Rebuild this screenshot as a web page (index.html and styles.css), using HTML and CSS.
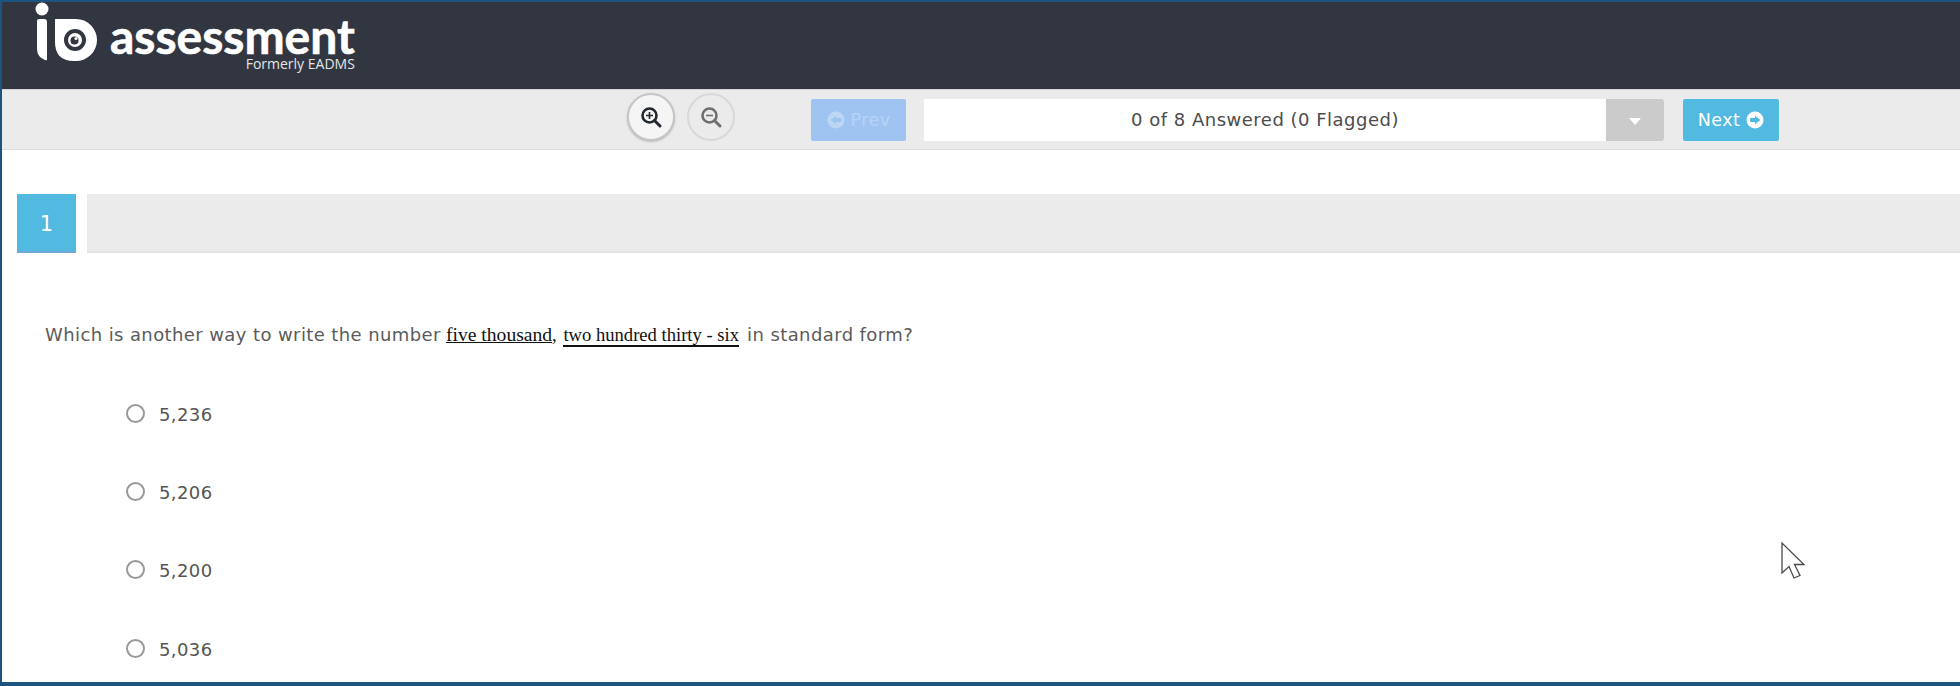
FILE: index.html
```html
<!DOCTYPE html>
<html lang="en">
<head>
<meta charset="utf-8">
<title>IO Assessment</title>
<link rel="stylesheet" href="styles.css">
</head>
<body>
<div class="frame">
  <header class="header">
    <div class="logo">
      <svg class="logo-mark" width="66" height="60" viewBox="0 0 66 60">
        <circle cx="7" cy="7" r="6.5" fill="#fff"/>
        <path d="M2 19 Q2 17 4 17 H9 Q12 17 12 20 V57 Q12 59 10 58 Q2 55 2 47 Z" fill="#fff"/>
        <path d="M20 17 H41 A21 21 0 1 1 41 59 H39 Q20 59 20 40 Z" fill="#fff"/>
        <circle cx="40" cy="38" r="11" fill="#313641"/>
        <circle cx="40" cy="38" r="7" fill="#fff"/>
        <circle cx="39.500" cy="38.500" r="4" fill="#313641"/>
        <circle cx="41" cy="36.500" r="1.500" fill="#fff"/>
      </svg>
      <div class="logo-text">
        <span class="logo-name">assessment</span>
        <span class="logo-sub">Formerly EADMS</span>
      </div>
    </div>
  </header>
  <nav class="toolbar">
    <div class="zooms">
      <button class="zoom zoom-on" type="button" aria-label="Zoom in">
        <svg width="24" height="24" viewBox="0 0 24 24" fill="none" stroke="#23272e" stroke-width="2.6"><circle cx="10.5" cy="10.5" r="7"/><path d="M15.5 15.5 21 21" stroke-linecap="round" stroke-width="3"/><path d="M10.5 7v7M7 10.500h7" stroke-width="1.600"/></svg>
      </button>
      <button class="zoom" type="button" aria-label="Zoom out">
        <svg width="24" height="24" viewBox="0 0 24 24" fill="none" stroke="#6d6f70" stroke-width="2.6"><circle cx="10.5" cy="10.5" r="7"/><path d="M15.5 15.5 21 21" stroke-linecap="round" stroke-width="3"/><path d="M7 10.500h7" stroke-width="1.600"/></svg>
      </button>
    </div>
    <button class="nav nav-prev" type="button">
      <svg width="18" height="18" viewBox="0 0 18 18"><circle cx="9" cy="9" r="8.500" fill="#bcd7f5"/><path d="M3.500 9 9 4.800V7h5v4H9v2.200z" fill="#9fc4f2"/></svg>
      <span>Prev</span>
    </button>
    <div class="status">
      <span class="status-text">0 of 8 Answered (0 Flagged)</span>
      <span class="status-drop"><i class="caret"></i></span>
    </div>
    <button class="nav nav-next" type="button">
      <span>Next</span>
      <svg width="18" height="18" viewBox="0 0 18 18"><circle cx="9" cy="9" r="8.500" fill="#fff"/><path d="M14.500 9 9 4.800V7H4v4h5v2.200z" fill="#52b9e0"/></svg>
    </button>
  </nav>
  <main class="main">
    <div class="q-head">
      <div class="q-num">1</div>
      <div class="q-bar"></div>
    </div>
    <p class="q-text">Which is another way to write the number <span class="serif"><u class="serif-words">five thousand</u>, <span class="rule">two hundred thirty - six</span></span> in standard form?</p>
    <ul class="options">
      <li class="option"><i class="radio"></i><span>5,236</span></li>
      <li class="option"><i class="radio"></i><span>5,206</span></li>
      <li class="option"><i class="radio"></i><span>5,200</span></li>
      <li class="option"><i class="radio"></i><span>5,036</span></li>
    </ul>
  </main>
  <svg class="cursor" width="28" height="40" viewBox="0 0 28 40"><path d="M2 2V32L9 25.500 14 37 20 34.500 14.500 23.500H24Z" fill="#fff" stroke="#4a4a4a" stroke-width="1.300" stroke-linejoin="miter"/></svg>
</div>
</body>
</html>
```
FILE: styles.css
```css
* { box-sizing: border-box; }
html, body { margin: 0; padding: 0; }
body {
  width: 1960px;
  height: 686px;
  overflow: hidden;
  background: #fff;
  font-family: "DejaVu Sans", Verdana, sans-serif;
}
.frame {
  position: relative;
  height: 686px;
  overflow: hidden;
  border-top: 2px solid #1c5480;
  border-left: 2px solid #1c5480;
  border-bottom: 4px solid #1c5480;
}
.header {
  height: 87px;
  background: #313641;
}
.logo {
  display: flex;
  align-items: flex-start;
  padding-left: 33px;
}
.logo-mark { flex: none; }
.logo-text {
  display: flex;
  flex-direction: column;
  align-items: flex-end;
  margin-left: 9px;
  padding-top: 13px;
  color: #fff;
}
.logo-name {
  font-family: Lato, sans-serif;
  font-size: 48px;
  font-weight: 700;
  line-height: 42px;
  letter-spacing: 0;
  -webkit-text-stroke: 0.6px #fff;
}
.logo-sub {
  font-family: "Open Sans", sans-serif;
  font-size: 14px;
  line-height: 14px;
  color: #e4e5e7;
}
.toolbar {
  display: flex;
  align-items: center;
  height: 61px;
  padding-left: 625px;
  background: #ebebeb;
  border-top: 1px solid #d4d4d4;
  border-bottom: 1px solid #dcdcdc;
}
.zooms { display: flex; gap: 12px; margin-right: 76px; margin-top: -5px; }
.zoom {
  display: flex;
  align-items: center;
  justify-content: center;
  width: 48px;
  height: 48px;
  padding: 0;
  background: #ebebeb;
  border: 2px solid #d8d8d8;
  border-radius: 50%;
}
.zoom-on {
  background: #f5f5f5;
  border-color: #c6c6c6;
  box-shadow: 0 1px 2px #bbb;
}
.nav {
  display: flex;
  align-items: center;
  justify-content: center;
  gap: 6px;
  width: 95px;
  height: 42px;
  padding: 0;
  border: 0;
  border-radius: 2px;
  font-family: inherit;
  font-size: 17.500px;
  font-weight: 400;
  letter-spacing: 0.4px;
  color: #fff;
}
.nav-prev { background: #9fc4f2; color: #b7d3f5; }
.nav-next { background: #52b9e0; width: 96px; }
.status {
  display: flex;
  width: 740px;
  height: 42px;
  margin: 0 19px 0 18px;
  background: #fff;
}
.status-text {
  flex: 1;
  color: #4c4c4c;
  font-size: 18px;
  letter-spacing: 0.5px;
  line-height: 42px;
  text-align: center;
}
.status-drop {
  display: flex;
  align-items: center;
  justify-content: center;
  flex: none;
  width: 58px;
  background: #cbcbcb;
  border-radius: 0 2px 2px 0;
}
.caret {
  margin-top: 4px;
  border-top: 7px solid #fff;
  border-left: 6px solid transparent;
  border-right: 6px solid transparent;
}
.main { padding-top: 44px; }
.q-head {
  display: flex;
  gap: 11px;
  padding-left: 15px;
}
.q-num {
  flex: none;
  width: 59px;
  height: 59px;
  background: #52b9e0;
  border-bottom: 2px solid #6fa9da;
  color: #fff;
  font-size: 21px;
  line-height: 60px;
  text-align: center;
}
.q-bar {
  flex: 1;
  height: 59px;
  background: #ebebeb;
  border-bottom: 2px solid #e4e4e4;
}
.q-text {
  margin: 69px 0 0;
  padding-left: 43px;
  color: #5b5b5b;
  font-size: 18px;
  line-height: 26px;
  letter-spacing: 0.4px;
}
.serif {
  color: #111;
  font-family: "Liberation Serif", serif;
  font-size: 18.600px;
  letter-spacing: 0;
  margin: 0 2px 0 -1px;
}
.serif-words { font-size: 19.600px; }
.rule {
  display: inline-block;
  line-height: 21px;
  border-bottom: 2px solid #111;
  margin-left: 2px;
}
.options {
  margin: 0;
  padding: 0 0 0 124px;
  list-style: none;
}
.option {
  display: flex;
  align-items: center;
  gap: 14px;
  height: 78.300px;
  color: #555;
  font-size: 18px;
  letter-spacing: 0.4px;
}
.option:first-child { margin-top: 27px; }
.radio {
  flex: none;
  width: 19px;
  height: 19px;
  background: #fff;
  border: 2px solid #999;
  border-radius: 50%;
  margin-top: -2px;
}
.cursor {
  position: absolute;
  left: 1778px;
  top: 539px;
}
```
